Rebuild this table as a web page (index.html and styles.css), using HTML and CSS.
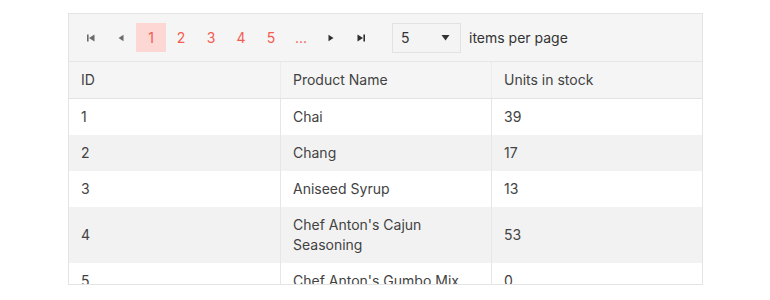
FILE: index.html
```html
<!DOCTYPE html>
<html>
<head>
<meta charset="utf-8">
<link rel="stylesheet" href="styles.css">
</head>
<body>
<div class="grid">
  <div class="pager">
    <div class="pbtn icon" title="first">
      <svg width="10" height="10" viewBox="0 0 10 10"><rect x="1" y="1.5" width="1.6" height="7" fill="#6b6b6b"/><path d="M8.5 1.5 L3 5 L8.5 8.5 Z" fill="#6b6b6b"/></svg>
    </div>
    <div class="pbtn icon" title="prev">
      <svg width="10" height="10" viewBox="0 0 10 10"><path d="M7.5 1.8 L2.5 5 L7.5 8.2 Z" fill="#6b6b6b"/></svg>
    </div>
    <div class="pbtn num selected">1</div>
    <div class="pbtn num">2</div>
    <div class="pbtn num">3</div>
    <div class="pbtn num">4</div>
    <div class="pbtn num">5</div>
    <div class="pbtn num">...</div>
    <div class="pbtn icon" title="next">
      <svg width="10" height="10" viewBox="0 0 10 10"><path d="M2.5 1.8 L7.5 5 L2.5 8.2 Z" fill="#2f2f2f"/></svg>
    </div>
    <div class="pbtn icon" title="last">
      <svg width="10" height="10" viewBox="0 0 10 10"><path d="M1.5 1.5 L7 5 L1.5 8.5 Z" fill="#2f2f2f"/><rect x="7.4" y="1.5" width="1.6" height="7" fill="#2f2f2f"/></svg>
    </div>
    <div class="sizer">
      <span class="sizer-val">5</span>
      <svg width="9" height="7" viewBox="0 0 9 7"><path d="M0.5 1 L8.5 1 L4.5 6.5 Z" fill="#333"/></svg>
    </div>
    <span class="ipp">items per page</span>
  </div>
  <div class="row head">
    <div class="cell">ID</div>
    <div class="cell">Product Name</div>
    <div class="cell">Units in stock</div>
  </div>
  <div class="body">
    <div class="row">
      <div class="cell">1</div>
      <div class="cell">Chai</div>
      <div class="cell">39</div>
    </div>
    <div class="row alt">
      <div class="cell">2</div>
      <div class="cell">Chang</div>
      <div class="cell">17</div>
    </div>
    <div class="row">
      <div class="cell">3</div>
      <div class="cell">Aniseed Syrup</div>
      <div class="cell">13</div>
    </div>
    <div class="row alt">
      <div class="cell">4</div>
      <div class="cell">Chef Anton's Cajun Seasoning</div>
      <div class="cell">53</div>
    </div>
    <div class="row">
      <div class="cell">5</div>
      <div class="cell">Chef Anton's Gumbo Mix</div>
      <div class="cell">0</div>
    </div>
  </div>
</div>
</body>
</html>
```

FILE: styles.css
```css
html, body {
  margin: 0;
  padding: 0;
  background: #ffffff;
}
body {
  padding: 13px 0 0 68px;
  font-family: Inter, "Liberation Sans", sans-serif;
  font-size: 14px;
  color: #424242;
}
.grid {
  width: 633px;
  height: 270px;
  border: 1px solid #e4e4e4;
  border-bottom: 1px solid #e4e4e4;
  overflow: hidden;
  display: flex;
  flex-direction: column;
}
.pager {
  height: 47px;
  flex: none;
  background: #f5f5f5;
  border-bottom: 1px solid #e6e6e6;
  display: flex;
  align-items: center;
  padding-left: 7px;
  box-sizing: content-box;
}
.pbtn {
  width: 30px;
  height: 29px;
  display: flex;
  align-items: center;
  justify-content: center;
  line-height: 20px;
}
.num {
  color: #f35c4f;
}
.selected {
  background: #fcd7d3;
}
.sizer {
  margin-left: 16px;
  width: 69px;
  height: 30px;
  box-sizing: border-box;
  border: 1px solid #e2e2e2;
  background: #f4f4f4;
  display: flex;
  align-items: center;
  justify-content: space-between;
  padding: 0 10px 0 8px;
  color: #333;
}
.sizer-val {
  line-height: 20px;
}
.ipp {
  margin-left: 8px;
  color: #333;
  line-height: 20px;
}
.row {
  display: grid;
  grid-template-columns: 211px 211px 211px;
  flex: none;
}
.head {
  background: #f5f5f5;
  border-bottom: 1px solid #e3e3e3;
}
.head .cell {
  padding: 8px 12px 8px 12px;
  height: 36px;
  box-sizing: border-box;
  display: flex;
  align-items: center;
}
.cell {
  padding: 8px 12px;
  line-height: 20px;
  display: flex;
  align-items: center;
  border-left: 1px solid #e6e6e6;
}
.cell:first-child {
  border-left: none;
}
.head .cell {
  border-left-color: #ebebeb;
}
.alt {
  background: #f2f2f2;
}
```
